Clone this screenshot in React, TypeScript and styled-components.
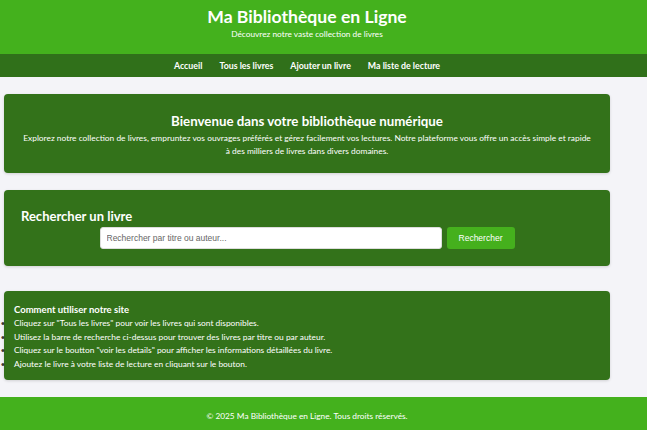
import React from "react";
import styled, { createGlobalStyle, css } from "styled-components";

const Global = createGlobalStyle`
  html, body { margin: 0; padding: 0; }
  body {
    background: #f4f4f8;
    font-family: Lato, "Open Sans", sans-serif;
    color: #ffffff;
  }
  * { box-sizing: border-box; }
`;

const gutter = css`
  padding-right: 33px;
`;

const Header = styled.header`
  ${gutter};
  background: #44b11d;
  height: 54px;
  display: flex;
  flex-direction: column;
  align-items: center;
  padding-top: 5px;
`;

const Title = styled.h1`
  margin: 0;
  font-size: 17.6px;
  line-height: 23px;
  font-weight: 700;
`;

const Subtitle = styled.p`
  margin: 0;
  font-size: 8.3px;
  line-height: 12px;
`;

const Nav = styled.nav`
  ${gutter};
  background: #30701a;
  height: 23px;
  display: flex;
  justify-content: center;
  align-items: center;
  gap: 17px;
`;

const NavLink = styled.a`
  color: #ffffff;
  text-decoration: none;
  font-size: 8.8px;
  font-weight: 700;
`;

const Main = styled.main`
  padding: 17px 37px 17px 4px;
  display: flex;
  flex-direction: column;
  gap: 17px;
`;

const Card = styled.section<{ $spaced?: boolean }>`
  background: #33721a;
  border-radius: 4px;
  box-shadow: 0 1px 3px rgba(0, 0, 0, 0.15);
  margin-top: ${(p) => (p.$spaced ? "8px" : "0")};
`;

const WelcomeCard = styled(Card)`
  padding: 19px 18px 15px;
  text-align: center;
`;

const WelcomeTitle = styled.h2`
  margin: 0 0 3px;
  font-size: 13.3px;
  line-height: 16px;
  font-weight: 700;
`;

const WelcomeText = styled.p`
  margin: 0;
  font-size: 8.4px;
  line-height: 13px;
`;

const SearchCard = styled(Card)`
  padding: 18px 17px 17px;
`;

const SearchTitle = styled.h2`
  margin: 0 0 3px;
  font-size: 13px;
  line-height: 16px;
  font-weight: 700;
`;

const SearchRow = styled.form`
  display: flex;
  justify-content: center;
  gap: 5px;
`;

const SearchInput = styled.input`
  width: 342px;
  height: 22px;
  border: 1px solid #dddddd;
  border-radius: 3px;
  padding: 0 6px;
  font-family: "Liberation Sans", Arial, sans-serif;
  font-size: 8.5px;
  color: #333;
  background: #fff;
  &::placeholder { color: #666; }
`;

const SearchButton = styled.button`
  width: 68px;
  height: 22px;
  border: none;
  border-radius: 3px;
  background: #45b01d;
  color: #ffffff;
  font-family: "Liberation Sans", Arial, sans-serif;
  font-size: 8.5px;
`;

const HelpCard = styled(Card)`
  padding: 12px 10px 9px 10px;
`;

const HelpTitle = styled.h3`
  margin: 0 0 1px 0;
  font-size: 9.5px;
  line-height: 13px;
  font-weight: 700;
`;

const HelpList = styled.ul`
  margin: 0;
  padding-left: 0;
  list-style: disc outside;
`;

const HelpItem = styled.li`
  font-size: 8.4px;
  line-height: 13.5px;
  &::marker {
    content: "•    ";
    color: #3a3a3a;
  }
`;

const Footer = styled.footer`
  ${gutter};
  background: #44b11d;
  padding-top: 13px;
  padding-bottom: 14px;
  text-align: center;
  font-size: 8.3px;
  line-height: 13px;
`;

export default function App() {
  return (
    <>
      <Global />
      <Header>
        <Title>Ma Bibliothèque en Ligne</Title>
        <Subtitle>Découvrez notre vaste collection de livres</Subtitle>
      </Header>
      <Nav>
        <NavLink href="#">Accueil</NavLink>
        <NavLink href="#">Tous les livres</NavLink>
        <NavLink href="#">Ajouter un livre</NavLink>
        <NavLink href="#">Ma liste de lecture</NavLink>
      </Nav>
      <Main>
        <WelcomeCard>
          <WelcomeTitle>Bienvenue dans votre bibliothèque numérique</WelcomeTitle>
          <WelcomeText>
            Explorez notre collection de livres, empruntez vos ouvrages préférés et gérez facilement vos lectures. Notre plateforme vous offre un accès simple et rapide à des milliers de livres dans divers domaines.
          </WelcomeText>
        </WelcomeCard>
        <SearchCard>
          <SearchTitle>Rechercher un livre</SearchTitle>
          <SearchRow onSubmit={(e) => e.preventDefault()}>
            <SearchInput placeholder="Rechercher par titre ou auteur..." />
            <SearchButton type="submit">Rechercher</SearchButton>
          </SearchRow>
        </SearchCard>
        <HelpCard $spaced>
          <HelpTitle>Comment utiliser notre site</HelpTitle>
          <HelpList>
            <HelpItem>Cliquez sur "Tous les livres" pour voir les livres qui sont disponibles.</HelpItem>
            <HelpItem>Utilisez la barre de recherche ci-dessus pour trouver des livres par titre ou par auteur.</HelpItem>
            <HelpItem>Cliquez sur le boutton "voir les details" pour afficher les informations détaillées du livre.</HelpItem>
            <HelpItem>Ajoutez le livre à votre liste de lecture en cliquant sur le bouton.</HelpItem>
          </HelpList>
        </HelpCard>
      </Main>
      <Footer>© 2025 Ma Bibliothèque en Ligne. Tous droits réservés.</Footer>
    </>
  );
}
